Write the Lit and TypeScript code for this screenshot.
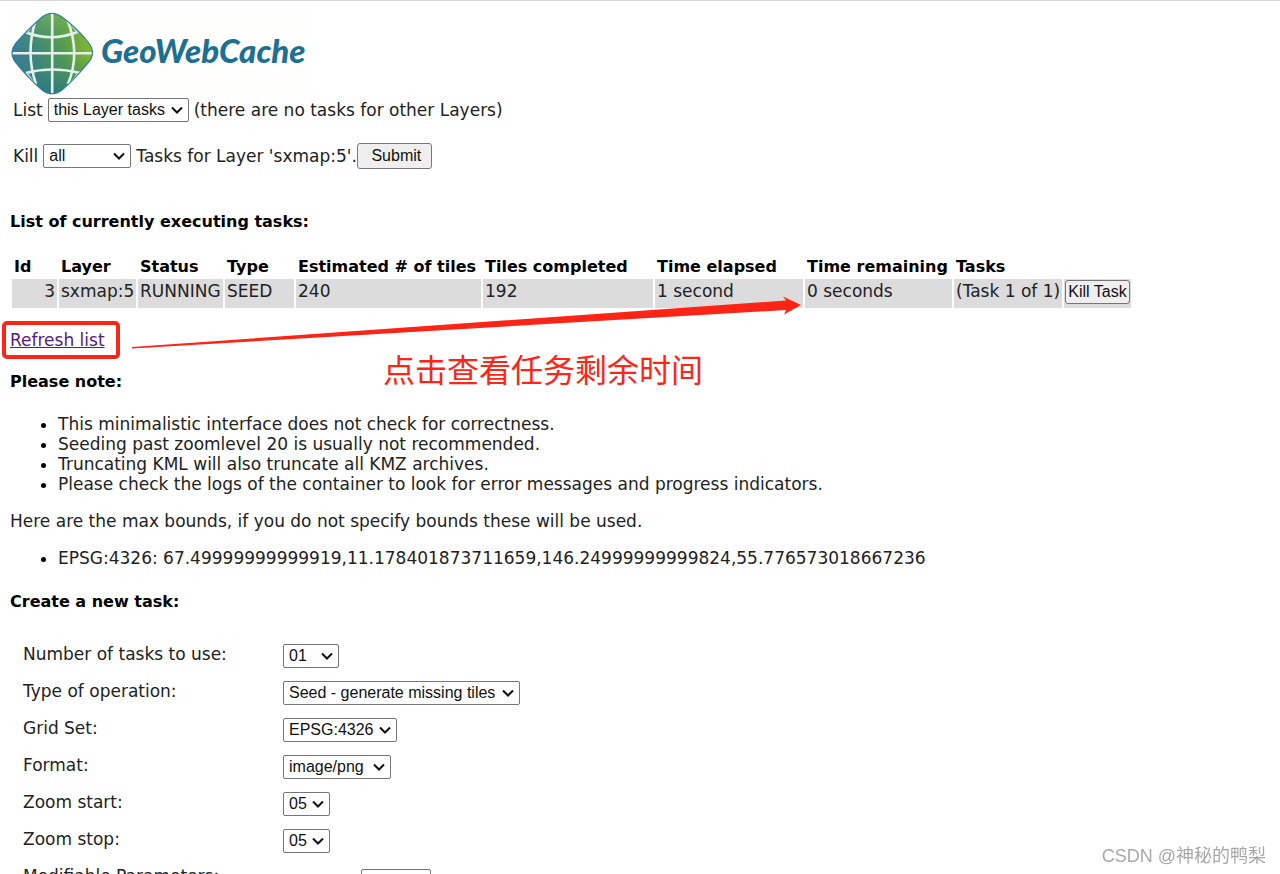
import { LitElement, html, css } from "lit";
import { customElement } from "lit/decorators.js";

interface Field {
  id: string;
  label: string;
  value: string;
  size: string;
}

const FIELDS: Field[] = [
  { id: "threads", label: "Number of tasks to use:", value: "01", size: "w-threads" },
  { id: "operation", label: "Type of operation:", value: "Seed - generate missing tiles", size: "w-operation" },
  { id: "gridset", label: "Grid Set:", value: "EPSG:4326", size: "w-gridset" },
  { id: "format", label: "Format:", value: "image/png", size: "w-format" },
  { id: "zoomstart", label: "Zoom start:", value: "05", size: "w-zoom" },
  { id: "zoomstop", label: "Zoom stop:", value: "05", size: "w-zoom" },
];

const NOTES = [
  "This minimalistic interface does not check for correctness.",
  "Seeding past zoomlevel 20 is usually not recommended.",
  "Truncating KML will also truncate all KMZ archives.",
  "Please check the logs of the container to look for error messages and progress indicators.",
];

@customElement("gwc-logo")
export class GwcLogo extends LitElement {
  static styles = css`
    :host { display: block; width: 300px; height: 86px; background: #fefefc; }
    svg { display: block; }
    text { font: italic 900 33px Lato, "Open Sans", sans-serif; fill: #1b7093; }
  `;

  render() {
    return html`
      <svg width="300" height="86" viewBox="10 10 300 86" role="img" aria-label="GeoWebCache">
        <defs>
          <linearGradient id="base" x1="0" y1="0.65" x2="1" y2="0.4">
            <stop offset="0" stop-color="#3c74a8" />
            <stop offset="0.3" stop-color="#3a8383" />
            <stop offset="0.65" stop-color="#559c50" />
            <stop offset="1" stop-color="#94c11f" />
          </linearGradient>
          <linearGradient id="shade" x1="0" y1="0" x2="0" y2="1">
            <stop offset="0" stop-color="#8cc060" stop-opacity="0.6" />
            <stop offset="0.5" stop-color="#4a9060" stop-opacity="0.05" />
            <stop offset="1" stop-color="#1f7080" stop-opacity="0.75" />
          </linearGradient>
          <clipPath id="shape">
            <path d="M42 17Q52 9.500 62 17Q77 28 88 42Q97 53 88 63Q77 77 62 90Q52 97.500 42 90Q27 77 16 63Q8 53 16 43Q28 29 42 17Z" />
          </clipPath>
        </defs>
        <g clip-path="url(#shape)">
          <rect x="10" y="10" width="84" height="86" fill="url(#base)" />
          <rect x="10" y="10" width="84" height="86" fill="url(#shade)" />
          <g fill="none" stroke="#e3f0e8" stroke-width="2.6">
            <path d="M52.200 12V95M11 53.300H94" />
            <path d="M36 19Q25 53 36 84M67 19Q81 53 68 84" />
            <path d="M25 32Q52 43 80 31M26 73Q52 66 80 73" />
          </g>
          <g fill="none" stroke="#b5d0dc" stroke-width="2">
            <path d="M40 17Q33 23 27 33M64 17Q72 24 78 33M27 73Q34 84 41 91M78 73Q71 84 63 91" />
          </g>
        </g>
        <path d="M42 17Q52 9.500 62 17Q77 28 88 42Q97 53 88 63Q77 77 62 90Q52 97.500 42 90Q27 77 16 63Q8 53 16 43Q28 29 42 17Z" fill="none" stroke="#2f7fa5" stroke-width="1.2" />
        <text x="101" y="63">GeoWebCache</text>
      </svg>
    `;
  }
}

@customElement("app-root")
export class AppRoot extends LitElement {
  static styles = css`
    :host {
      display: block;
      position: relative;
      box-sizing: border-box;
      padding: 9px 10px 0;
      border-top: 1px solid #d9d9d9;
      background: #fff;
      color: #222;
      font: 17px/20px "DejaVu Sans", sans-serif;
    }
    .filters { margin-top: 1px; }
    .line { display: flex; align-items: center; gap: 5px; padding-left: 3px; height: 26px; }
    .line + .line { margin-top: 20px; }
    .joined { display: flex; align-items: center; }
    select, button, input {
      box-sizing: border-box;
      margin: 0;
      font: 16px/20px "Liberation Sans", Arial, sans-serif;
      color: #111;
    }
    select, input { height: 24px; border: 1px solid #767676; border-radius: 2px; background: #fff; }
    select {
      appearance: none;
      padding: 0 0 0 5px;
      background: #fff url("data:image/svg+xml,%3Csvg xmlns='http://www.w3.org/2000/svg' width='12' height='8'%3E%3Cpath d='M1 1.500L6 6.500L11 1.500' fill='none' stroke='%23111' stroke-width='2'/%3E%3C/svg%3E") no-repeat right 5px center;
    }
    button { border: 1px solid #767676; border-radius: 3px; background: #efefef; padding: 0; white-space: nowrap; }
    .submit { width: 75px; height: 26px; padding-left: 4px; }
    .kill { display: block; width: 65px; height: 24px; }
    .w-list { width: 141px; }
    .w-kill { width: 88px; }
    .w-threads { width: 56px; }
    .w-operation { width: 237px; }
    .w-gridset { width: 114px; }
    .w-format { width: 108px; }
    .w-zoom { width: 47px; }
    .w-param { width: 70px; margin: 3px 0 0 78px; }
    h4 { margin: 0; font-size: 16px; line-height: 20px; font-weight: 700; color: #000; }
    .tasks-title { margin-top: 43px; }
    .tasks { margin-top: 23px; border-spacing: 2px 0; table-layout: fixed; width: 1123px; }
    th, td { box-sizing: border-box; text-align: left; vertical-align: top; padding: 2px; white-space: nowrap; }
    th { font-size: 16px; color: #000; }
    td { background: #dcdcdc; height: 29px; }
    .num { text-align: right; }
    .action { padding: 1px; }
    .c-id { width: 45px; }
    .c-layer { width: 77px; }
    .c-status { width: 85px; }
    .c-type { width: 69px; }
    .c-est { width: 185px; }
    .c-done { width: 170px; }
    .c-elapsed { width: 148px; }
    .c-left { width: 147px; }
    .c-task { width: 108px; }
    .refresh { position: relative; display: inline-block; margin-top: 22px; color: #551a8b; }
    .refresh::after {
      content: "";
      position: absolute;
      inset: -9px -15px -9px -8px;
      border: 4px solid #ff2415;
      border-radius: 5px;
    }
    .note-title { margin-top: 22px; }
    ul { margin: 0; padding-left: 48px; }
    li::marker { color: #000; }
    .notes { margin-top: 22px; }
    p { margin: 17px 0; }
    .create { margin: 24px 0 32px; }
    .form { display: grid; grid-template-columns: 260px 1fr; row-gap: 13px; padding-left: 13px; align-items: start; }
    .form select { justify-self: start; }
    .arrow { position: absolute; left: 130px; top: 294px; fill: #ff2415; pointer-events: none; }
    .callout {
      position: absolute;
      left: 383px;
      top: 347px;
      color: #ff2415;
      font: 400 32px/40px "Noto Sans CJK SC", sans-serif;
      white-space: nowrap;
    }
    .watermark {
      position: fixed;
      right: 14px;
      bottom: 6px;
      color: #a8a8a8;
      font: 18px/24px "Liberation Sans", "Noto Sans CJK SC", sans-serif;
    }
  `;

  render() {
    return html`
      <gwc-logo></gwc-logo>
      <form class="filters" @submit=${(e: Event) => e.preventDefault()}>
        <div class="line">
          <label for="list">List</label>
          <select id="list" class="w-list"><option>this Layer tasks</option></select>
          <span>(there are no tasks for other Layers)</span>
        </div>
        <div class="line">
          <label for="kill">Kill</label>
          <select id="kill" class="w-kill"><option>all</option><option>running</option></select>
          <span class="joined">Tasks for Layer 'sxmap:5'.<button class="submit">Submit</button></span>
        </div>
      </form>

      <h4 class="tasks-title">List of currently executing tasks:</h4>
      <table class="tasks">
        <thead>
          <tr>
            <th class="c-id">Id</th>
            <th class="c-layer">Layer</th>
            <th class="c-status">Status</th>
            <th class="c-type">Type</th>
            <th class="c-est">Estimated # of tiles</th>
            <th class="c-done">Tiles completed</th>
            <th class="c-elapsed">Time elapsed</th>
            <th class="c-left">Time remaining</th>
            <th class="c-task">Tasks</th>
            <th></th>
          </tr>
        </thead>
        <tbody>
          <tr>
            <td class="num">3</td>
            <td>sxmap:5</td>
            <td>RUNNING</td>
            <td>SEED</td>
            <td>240</td>
            <td>192</td>
            <td>1 second</td>
            <td>0 seconds</td>
            <td>(Task 1 of 1)</td>
            <td class="action"><button class="kill">Kill Task</button></td>
          </tr>
        </tbody>
      </table>

      <a class="refresh" href="#">Refresh list</a>

      <h4 class="note-title">Please note:</h4>
      <ul class="notes">${NOTES.map((n) => html`<li>${n}</li>`)}</ul>
      <p>Here are the max bounds, if you do not specify bounds these will be used.</p>
      <ul><li>EPSG:4326: 67.49999999999919,11.178401873711659,146.24999999999824,55.776573018667236</li></ul>

      <h4 class="create">Create a new task:</h4>
      <form class="form" @submit=${(e: Event) => e.preventDefault()}>
        ${FIELDS.map(
          (f) => html`
            <label for=${f.id}>${f.label}</label>
            <select id=${f.id} class=${f.size}><option>${f.value}</option></select>
          `
        )}
        <label for="param">Modifiable Parameters:</label>
        <input id="param" class="w-param" type="text" />
      </form>

      <svg class="arrow" width="672" height="58" viewBox="130 295 672 58" aria-hidden="true">
        <path d="M132 347 L786 300.500 L783 296.500 L801 305 L784 314.500 L786 310 L132 348.500 Z" />
      </svg>
      <span class="callout">点击查看任务剩余时间</span>
      <span class="watermark">CSDN @神秘的鸭梨</span>
    `;
  }
}
